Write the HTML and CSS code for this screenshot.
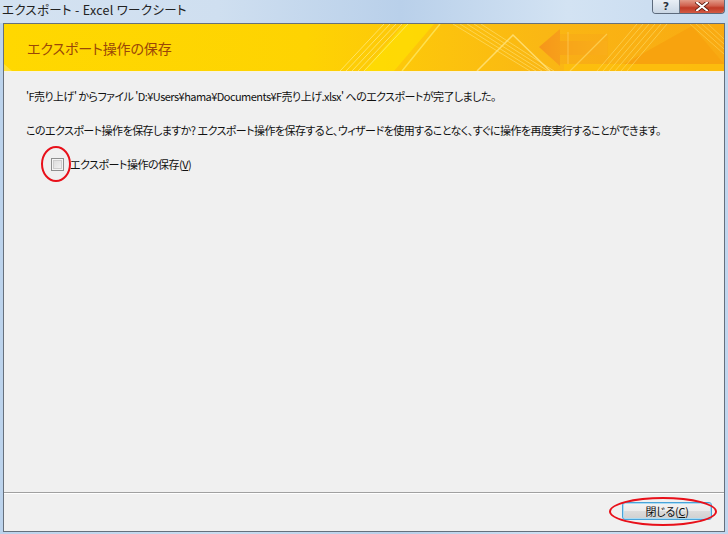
FILE: index.html
```html
<!DOCTYPE html>
<html lang="ja">
<head>
<meta charset="utf-8">
<title>エクスポート - Excel ワークシート</title>
<link rel="stylesheet" href="styles.css">
</head>
<body>
<div class="window">
  <div class="titlebar">
    <span class="title">エクスポート - Excel ワークシート</span>
    <div class="caption-buttons">
      <span class="cbtn help">?</span>
      <span class="cbtn close">
        <svg width="14" height="9" viewBox="0 0 14 9"><path d="M2 0.5 L12 8.5 M12 0.5 L2 8.5" stroke="#5a1a10" stroke-width="3.6" stroke-linecap="square"/><path d="M2 0.5 L12 8.5 M12 0.5 L2 8.5" stroke="#ffffff" stroke-width="2" stroke-linecap="square"/></svg>
      </span>
    </div>
  </div>
  <div class="client">
    <div class="banner">
      <svg class="banner-art" width="720" height="47" viewBox="0 0 720 47" preserveAspectRatio="none">
        <defs>
          <linearGradient id="bg" x1="0" y1="0" x2="1" y2="0">
            <stop offset="0" stop-color="#ffd800"/>
            <stop offset="0.42" stop-color="#fed302"/>
            <stop offset="0.55" stop-color="#fdc80a"/>
            <stop offset="0.75" stop-color="#fab714"/>
            <stop offset="1" stop-color="#f9aa12"/>
          </linearGradient>
          <linearGradient id="arrow" x1="0" y1="0" x2="1" y2="0">
            <stop offset="0" stop-color="#f6961a"/>
            <stop offset="1" stop-color="#fbb51a"/>
          </linearGradient>
        </defs>
        <rect width="720" height="47" fill="url(#bg)"/>
        <polygon points="360,47 400,0 430,0 390,47" fill="#ffe400" opacity="0.6"/>
        <rect x="560" y="40" width="160" height="7" fill="#fdc00c" opacity="0.8"/>
        <polygon points="620,40 688,2 720,40" fill="#f8a30e"/>
        <g stroke="#ffd860" stroke-width="1" opacity="0.55">
          <line x1="686" y1="0" x2="720" y2="30"/>
          <line x1="692" y1="0" x2="720" y2="25"/>
          <line x1="698" y1="0" x2="720" y2="20"/>
          <line x1="704" y1="0" x2="720" y2="15"/>
        </g>
        <g stroke="#fff2a0" stroke-width="1" opacity="0.6">
          <line x1="336" y1="47" x2="380" y2="0"/>
          <line x1="342" y1="47" x2="386" y2="0"/>
          <line x1="348" y1="47" x2="392" y2="0"/>
          <line x1="354" y1="47" x2="398" y2="0"/>
          <line x1="360" y1="47" x2="404" y2="0"/>
        </g>
        <line x1="398" y1="47" x2="436" y2="0" stroke="#ffe860" stroke-width="1.5" opacity="0.8"/>
        <g stroke="#ffe680" stroke-width="1" opacity="0.55">
          <line x1="449" y1="0" x2="526" y2="47"/>
          <line x1="456" y1="0" x2="532" y2="47"/>
          <line x1="463" y1="0" x2="538" y2="47"/>
          <line x1="470" y1="0" x2="544" y2="47"/>
          <line x1="477" y1="0" x2="550" y2="47"/>
        </g>
        <polyline points="473,47 509,11 546,47" fill="none" stroke="#ffe27a" stroke-width="1.5" opacity="0.85"/>
        <polygon points="535,23 556,5 556,17 603,17 603,31 556,31 556,42" fill="url(#arrow)"/>
        <rect x="556" y="10" width="48" height="30" fill="#f8a818" opacity="0.5"/>
        <line x1="564" y1="8" x2="564" y2="40" stroke="#ffd060" stroke-width="1" opacity="0.7"/>
        <line x1="566" y1="47" x2="603" y2="10" stroke="#ffd860" stroke-width="1.3" opacity="0.7"/>
        <g stroke="#ffe070" stroke-width="1" opacity="0.55">
          <line x1="593" y1="47" x2="633" y2="0"/>
          <line x1="599" y1="47" x2="639" y2="0"/>
          <line x1="605" y1="47" x2="645" y2="0"/>
          <line x1="611" y1="47" x2="651" y2="0"/>
          <line x1="617" y1="47" x2="657" y2="0"/>
          <line x1="623" y1="47" x2="663" y2="0"/>
        </g>
        <polygon points="0,47 0,40 8,47" fill="#ffe860" opacity="0.6"/>
      </svg>
      <h1 class="banner-title">エクスポート操作の保存</h1>
    </div>
    <div class="content">
      <p class="msg">'F売り上げ' からファイル 'D:¥Users¥hama¥Documents¥F売り上げ.xlsx' へのエクスポートが完了しました。</p>
      <p class="msg">このエクスポート操作を保存しますか? エクスポート操作を保存すると、ウィザードを使用することなく、すぐに操作を再度実行することができます。</p>
      <label class="check-row">
        <span class="checkbox"><span class="mark-ellipse small"></span></span>
        <span class="check-label">エクスポート操作の保存(<u>V</u>)</span>
      </label>
    </div>
    <div class="footer">
      <button class="btn" type="button">閉じる(<u>C</u>)<span class="mark-ellipse wide"></span></button>
    </div>
  </div>
</div>
</body>
</html>
```

FILE: styles.css
```css
* { box-sizing: border-box; }
html, body {
  margin: 0;
  padding: 0;
}
body {
  width: 728px;
  height: 534px;
  overflow: hidden;
  background: #bad2eb;
  font-family: "Noto Sans CJK JP", sans-serif;
  font-feature-settings: "palt";
}
.window {
  width: 728px;
  height: 534px;
  display: flex;
  flex-direction: column;
  background: linear-gradient(to right, #bcd3ec 0%, #c9dcf0 30%, #b8cfe9 55%, #cde0f3 75%, #c0d6ee 100%);
}
.titlebar {
  height: 23px;
  display: flex;
  align-items: flex-start;
  background: linear-gradient(to right, #d4e2f1 0%, #cfdff0 30%, #b9d0ea 55%, #d3e3f3 78%, #c5d9ef 100%);
}
.title {
  margin-left: 2px;
  margin-top: 2px;
  font-size: 12.5px;
  line-height: 16px;
  color: #222;
  letter-spacing: 0.3px;
}
.caption-buttons {
  margin-left: auto;
  margin-right: 3px;
  display: flex;
  height: 14px;
  border: 1px solid #5c6a7c;
  border-top: none;
  border-radius: 0 0 4px 4px;
  overflow: hidden;
}
.cbtn {
  display: flex;
  align-items: center;
  justify-content: center;
  height: 13px;
}
.help {
  width: 27px;
  background: linear-gradient(#e9eff6, #c9d6e4);
  border-right: 1px solid #6e7c8c;
  color: #2a3340;
  font-family: "DejaVu Sans", sans-serif;
  font-weight: bold;
  font-size: 11px;
  text-shadow: 0 0 1px #fff;
}
.close {
  width: 44px;
  background: linear-gradient(#e29a88 0%, #d0604d 45%, #c03a26 60%, #d35a44 100%);
}
.client {
  margin-left: 3px;
  width: 722px;
  height: 509px;
  border: 1px solid #66707c;
  background: #f0f0f0;
  display: flex;
  flex-direction: column;
}
.banner {
  position: relative;
  height: 47px;
  flex: none;
  display: flex;
  align-items: center;
  border-bottom: 1px solid #f9f3df;
  box-sizing: content-box;
}
.banner-art {
  position: absolute;
  left: 0;
  top: 0;
}
.banner-title {
  position: relative;
  margin: 0 0 0 23px;
  font-size: 14px;
  font-weight: normal;
  color: #9a4708;
  letter-spacing: -0.1px;
}
.content {
  flex: 1;
  padding: 16px 0 0 22px;
}
.msg {
  margin: 0 0 18px;
  font-size: 11px;
  line-height: 16px;
  color: #111;
  letter-spacing: -0.55px;
}
.check-row {
  display: flex;
  align-items: center;
  margin: 7px 0 0 25px;
}
.checkbox {
  position: relative;
  width: 13px;
  height: 13px;
  border: 1px solid #8e8f8f;
  background: linear-gradient(135deg, #d8d8d8, #f6f6f6);
  box-shadow: inset 0 0 0 1px #f4f4f4, inset 0 0 0 2px #cdcdcd;
}
.check-label {
  margin-left: 6px;
  font-size: 11px;
  line-height: 16px;
  color: #111;
  letter-spacing: -0.5px;
}
.mark-ellipse {
  position: absolute;
  border: 2px solid #e8101a;
  border-radius: 50%;
  pointer-events: none;
}
.mark-ellipse.small {
  left: -11px;
  top: -13px;
  width: 30px;
  height: 36px;
}
.mark-ellipse.wide {
  left: -14px;
  top: -6px;
  width: 108px;
  height: 29px;
}
.footer {
  height: 39px;
  flex: none;
  border-top: 1px solid #a0a0a0;
  box-shadow: inset 0 1px 0 #ffffff;
  display: flex;
  justify-content: flex-end;
  align-items: flex-start;
  padding: 9px 12px 0 0;
}
.btn {
  position: relative;
  width: 90px;
  height: 18px;
  padding: 0;
  border: 1px solid #4aa3d8;
  border-radius: 3px;
  background: linear-gradient(#f3f3f3 0%, #ebebeb 50%, #dcdcdc 51%, #d0d0d0 100%);
  box-shadow: inset 0 0 0 1px #a9dcf5;
  font-family: "Noto Sans CJK JP", sans-serif;
  font-feature-settings: "palt";
  font-size: 11px;
  line-height: 16px;
  color: #111;
  letter-spacing: -0.3px;
}
u { text-underline-offset: 1px; }
```
